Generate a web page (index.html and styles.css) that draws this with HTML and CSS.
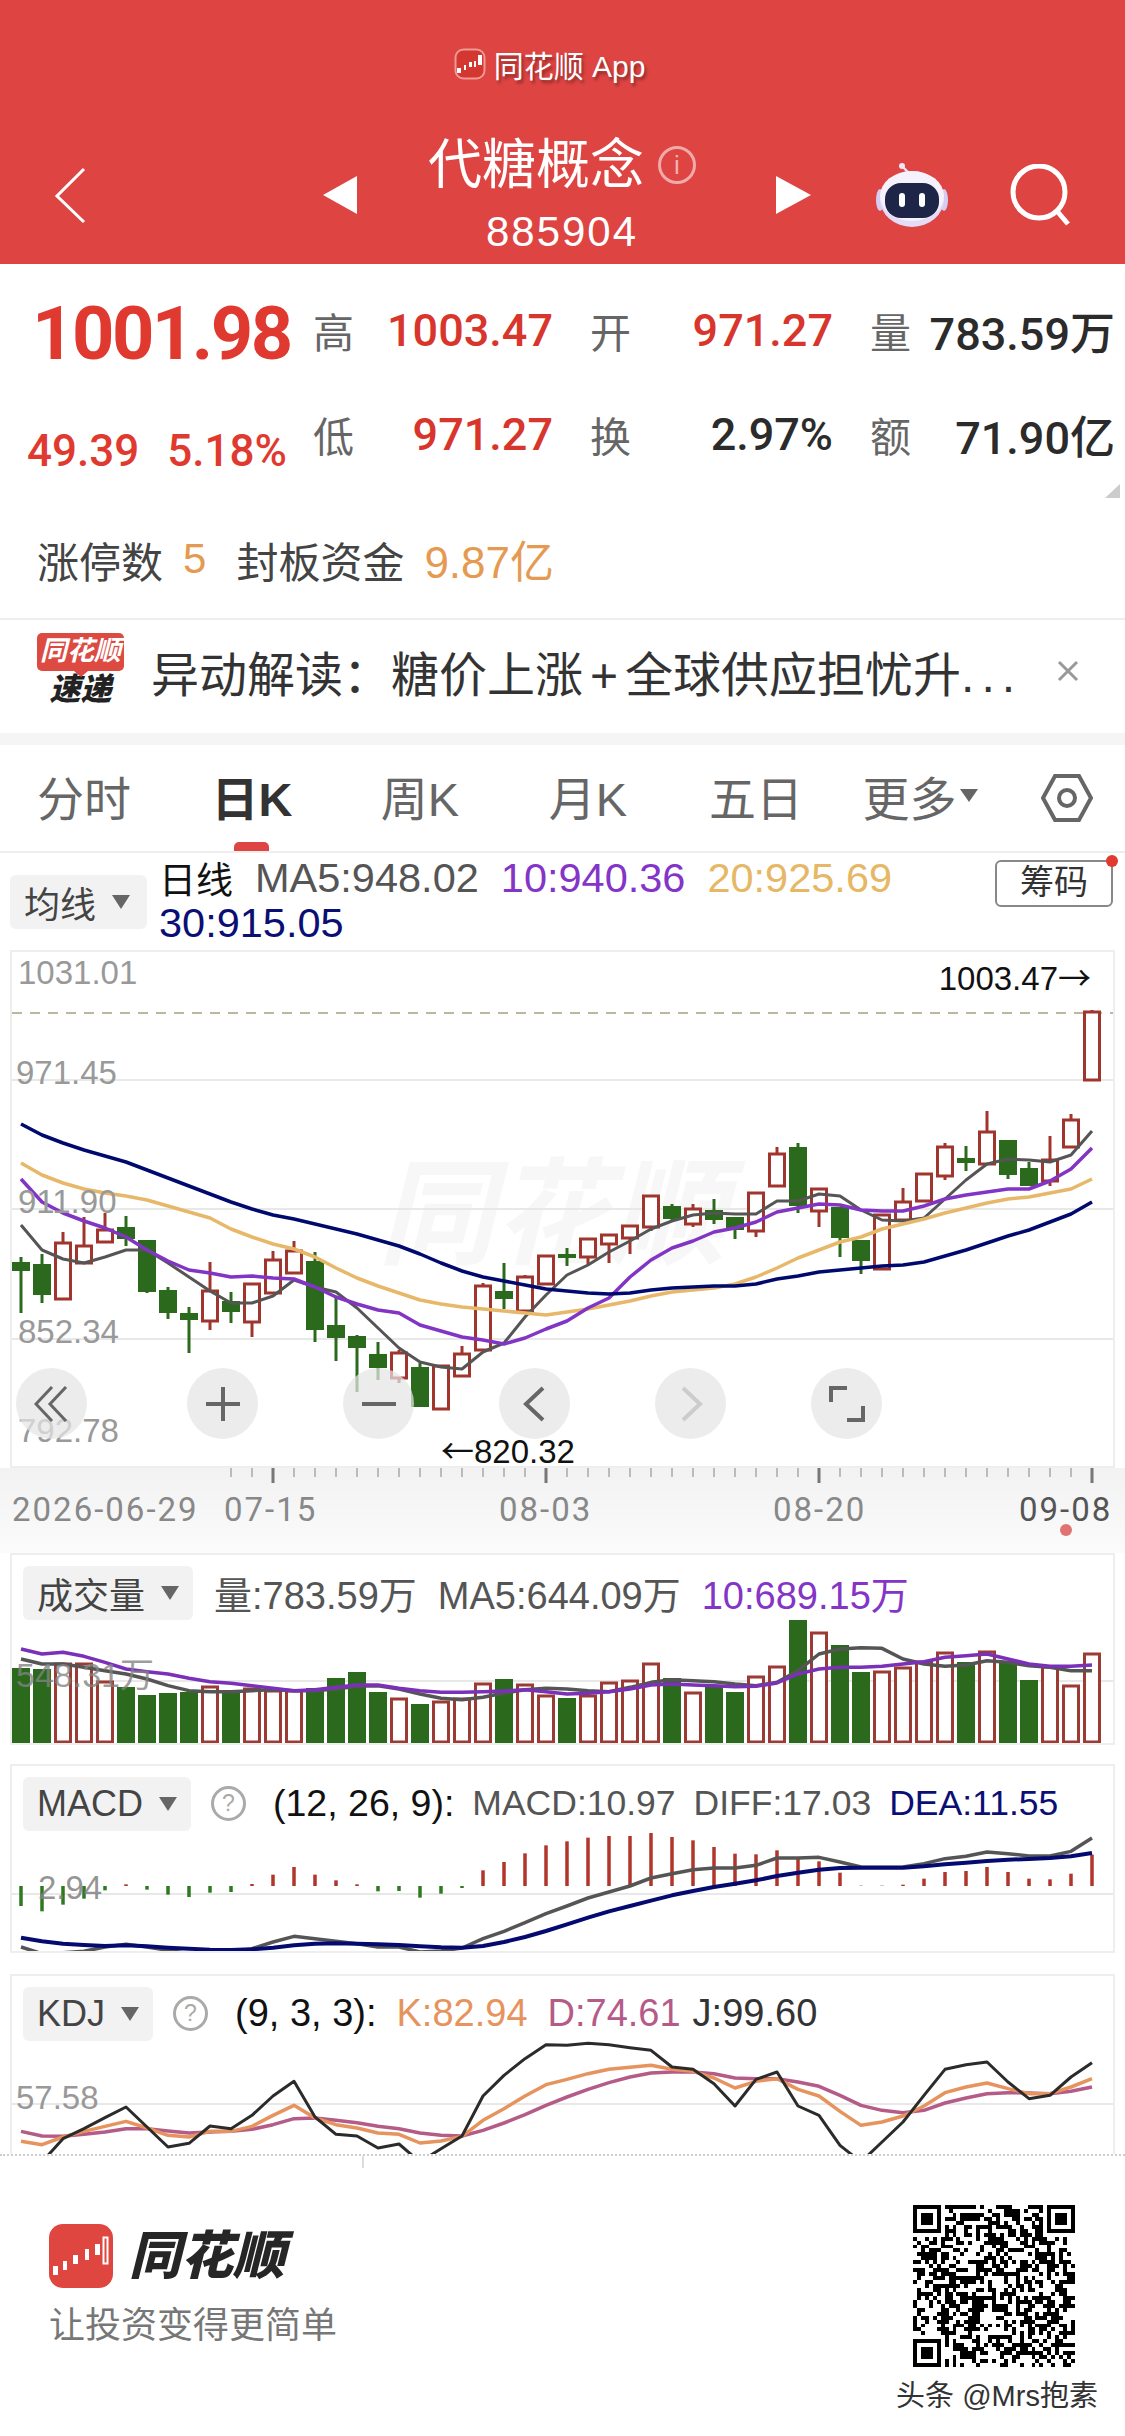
FILE: index.html
```html
<!DOCTYPE html>
<html lang="zh-CN">
<head>
    <meta charset="UTF-8">
    <meta name="viewport" content="width=device-width, initial-scale=1.0">
    <title>代糖概念</title>
    <link rel="stylesheet" href="styles.css">
</head>
<body>
    <header class="header">
        <div class="appRow">
            <svg class="appLogo" viewBox="0 0 32 32">
                <rect x="1.5" y="1.5" width="29" height="29" rx="8" fill="#d3372f" stroke="#f19a95" stroke-width="2"/>
                <path d="M3 20h4v5H3zM10 17h2v5h-2zM15 14h3v5h-3zM20 13h2v6h-2zM24 7h4v10h-4z" fill="#fff"/>
            </svg>
            <span class="appName">同花顺 App</span>
        </div>
        <div class="navRow">
            <svg class="backIcon" viewBox="0 0 32 56"><path d="M30 2L3 29l27 26" fill="none" stroke="#fff" stroke-width="3"/></svg>
            <span class="triLeft"></span>
            <div class="titleBox">
                <div class="titleLine">
                    <span class="title">代糖概念</span>
                    <span class="infoIcon">i</span>
                </div>
                <div class="code">885904</div>
            </div>
            <span class="triRight"></span>
            <div class="navRight">
                <svg class="robot" viewBox="0 0 72 64">
                    <path d="M33 12C32 6 27 7 27 3" fill="none" stroke="#eadff5" stroke-width="2.5"/>
                    <circle cx="26" cy="3" r="3" fill="#f0e6fa"/>
                    <ellipse cx="4" cy="37" rx="4" ry="11" fill="#d5ccf2"/>
                    <ellipse cx="68" cy="37" rx="4" ry="11" fill="#d5ccf2"/>
                    <ellipse cx="36" cy="36" rx="32" ry="28" fill="#e3dcf6"/>
                    <ellipse cx="36" cy="33" rx="32" ry="25" fill="#f6f2fc"/>
                    <rect x="9" y="20" width="54" height="35" rx="16" fill="#1f2547"/>
                    <rect x="23" y="30" width="6" height="14" rx="3" fill="#fff"/>
                    <rect x="43" y="30" width="6" height="14" rx="3" fill="#fff"/>
                </svg>
                <svg class="searchIcon" viewBox="0 0 60 62">
                    <circle cx="29" cy="28" r="26" fill="none" stroke="#fff" stroke-width="5"/>
                    <path d="M47 47l11 13" fill="none" stroke="#fff" stroke-width="5"/>
                </svg>
            </div>
        </div>
    </header>

    <section class="quote">
        <div class="quoteTop">
            <div class="priceCol">
                <div class="price">1001.98</div>
                <div class="change"><span>49.39</span><span>5.18%</span></div>
            </div>
            <div class="stats">
                <div class="stat"><span class="statName">高</span><span class="statVal up">1003.47</span></div>
                <div class="stat"><span class="statName">开</span><span class="statVal up">971.27</span></div>
                <div class="stat"><span class="statName">量</span><span class="statVal">783.59万</span></div>
                <div class="stat"><span class="statName">低</span><span class="statVal up">971.27</span></div>
                <div class="stat"><span class="statName">换</span><span class="statVal">2.97%</span></div>
                <div class="stat"><span class="statName">额</span><span class="statVal">71.90亿</span></div>
            </div>
        </div>
        <span class="cornerMark"></span>
        <div class="limitRow">
            <span>涨停数</span><span class="orange limitNum">5</span>
            <span class="fundName">封板资金</span><span class="orange limitFund">9.87亿</span>
        </div>
    </section>

    <section class="banner">
        <div class="bannerLogo">
            <span class="badge">同花顺</span>
            <span class="badgeSub">速递</span>
        </div>
        <div class="bannerText">异动解读：糖价上涨<span class="plus">+</span>全球供应担忧升<span class="dots">...</span></div>
        <svg class="closeIcon" viewBox="0 0 24 24"><path d="M3 3l18 18M21 3L3 21" stroke="#999" stroke-width="3"/></svg>
    </section>

    <nav class="tabs">
        <span class="tab">分时</span>
        <span class="tab active">日K</span>
        <span class="tab">周K</span>
        <span class="tab">月K</span>
        <span class="tab">五日</span>
        <span class="tab tabMore">更多<i class="tabArrow"></i></span>
        <svg class="setIcon" viewBox="0 0 52 48">
            <path d="M14 2h24l12 22-12 22H14L2 24z" fill="none" stroke="#666" stroke-width="4"/>
            <circle cx="26" cy="24" r="8" fill="none" stroke="#666" stroke-width="4"/>
        </svg>
    </nav>

    <section class="legend">
        <div class="chip maChip">均线<i class="chipArrow"></i></div>
        <div class="legendText">
            <div class="legendLine">
                <span class="black legendLead">日线</span>
                <span class="gray">MA5:948.02</span>
                <span class="purple">10:940.36</span>
                <span class="gold">20:925.69</span>
            </div>
            <div class="legendLine">
                <span class="navy">30:915.05</span>
            </div>
        </div>
        <div class="chipBtn">筹码<i class="redDot"></i></div>
    </section>

    <section class="panel klinePanel">
        <div class="watermark">同花顺</div>
        <svg id="kline" class="chart" viewBox="12 952 1101 514"></svg>
        <span class="yLabel y1">1031.01</span>
        <span class="yLabel y2">971.45</span>
        <span class="yLabel y3">911.90</span>
        <span class="yLabel y4">852.34</span>
        <span class="yLabel y5">792.78</span>
        <span class="mark markHigh">1003.47<span class="arrow">→</span></span>
        <span class="mark markLow"><span class="arrow">←</span>820.32</span>
        <div class="tools">
            <span class="tool toolFirst"><svg viewBox="0 0 36 36"><path d="M18 1L2 18l16 17M32 1L16 18l16 17" fill="none" stroke="#666" stroke-width="3"/></svg></span>
            <span class="tool"><svg viewBox="0 0 36 36"><path d="M18 1v34M1 18h34" fill="none" stroke="#666" stroke-width="4"/></svg></span>
            <span class="tool"><svg viewBox="0 0 36 36"><path d="M1 18h34" fill="none" stroke="#666" stroke-width="4"/></svg></span>
            <span class="tool"><svg viewBox="0 0 36 36"><path d="M26 2L9 18l17 16" fill="none" stroke="#666" stroke-width="4"/></svg></span>
            <span class="tool"><svg viewBox="0 0 36 36"><path d="M10 2l17 16L10 34" fill="none" stroke="#ccc" stroke-width="4"/></svg></span>
            <span class="tool"><svg viewBox="0 0 36 36"><path d="M2 16V2h16M34 20v14H18" fill="none" stroke="#666" stroke-width="4"/></svg></span>
        </div>
    </section>

    <section class="axis">
        <svg id="ticks" class="ticks" viewBox="0 0 1125 18"></svg>
        <div class="dates">
            <span>2026-06-29</span>
            <span>07-15</span>
            <span>08-03</span>
            <span>08-20</span>
            <span class="lastDate">09-08</span>
        </div>
        <i class="axisDot"></i>
    </section>

    <section class="panel volPanel">
        <div class="panelHead volHead">
            <div class="chip">成交量<i class="chipArrow"></i></div>
            <span class="gray">量:783.59万</span>
            <span class="gray">MA5:644.09万</span>
            <span class="purple">10:689.15万</span>
        </div>
        <svg id="vol" class="chart" viewBox="12 1621 1101 124"></svg>
        <span class="yLabel volLabel">548.31万</span>
    </section>

    <section class="panel macdPanel">
        <div class="panelHead macdHead">
            <div class="chip">MACD<i class="chipArrow"></i></div>
            <span class="help">?</span>
            <span class="black params">(12, 26, 9):</span>
            <span class="gray">MACD:10.97</span>
            <span class="gray">DIFF:17.03</span>
            <span class="navy">DEA:11.55</span>
        </div>
        <svg id="macd" class="chart" viewBox="12 1829 1101 122"></svg>
        <span class="yLabel macdLabel">2.94</span>
    </section>

    <section class="panel kdjPanel">
        <div class="panelHead kdjHead">
            <div class="chip">KDJ<i class="chipArrow"></i></div>
            <span class="help">?</span>
            <span class="black">(9, 3, 3):</span>
            <span class="kColor">K:82.94</span>
            <span class="dColor">D:74.61</span>
            <span class="jColor">J:99.60</span>
        </div>
        <svg id="kdj" class="chart" viewBox="12 2039 1101 115"></svg>
        <span class="yLabel kdjLabel">57.58</span>
    </section>

    <footer class="footer">
        <div class="brand">
            <div class="brandTop">
                <svg class="brandLogo" viewBox="0 0 64 64">
                    <rect width="64" height="64" rx="14" fill="#df4640"/>
                    <path d="M4 42h5v9H4zM14 37h4v9h-4zM24 31h5v9h-5zM36 25h4v11h-4zM46 20h5v11h-5z" fill="#fff"/>
                    <rect x="54.5" y="13.5" width="4" height="26" fill="none" stroke="#fff" stroke-width="2"/>
                </svg>
                <span class="brandName">同花顺</span>
            </div>
            <div class="slogan">让投资变得更简单</div>
        </div>
        <div class="qrBox">
            <svg id="qr" class="qr" viewBox="0 0 41 41" shape-rendering="crispEdges"></svg>
            <div class="credit">头条 @Mrs抱素</div>
        </div>
    </footer>

    <script src="chart.js"></script>
</body>
</html>
```

FILE: styles.css
```css
* {
    box-sizing: border-box;
}
body {
    margin: 0;
    width: 1125px;
    height: 2436px;
    overflow: hidden;
    background: #fff;
    font-family: "Liberation Sans", "Noto Sans CJK SC", sans-serif;
    color: #333;
}
i {
    font-style: normal;
}

/* header */
.header {
    height: 264px;
    background: #dd4442;
    color: #fff;
}
.appRow {
    display: flex;
    align-items: center;
    justify-content: center;
    height: 82px;
    padding: 46px 26px 0 0;
}
.appLogo {
    width: 32px;
    height: 32px;
    margin-right: 8px;
}
.appName {
    font-size: 30px;
    text-shadow: 2px 3px 3px rgba(0, 0, 0, 0.35);
}
.navRow {
    display: grid;
    grid-template-columns: 323px 34px 419px 35px 1fr;
    align-items: center;
    height: 130px;
    margin-top: 48px;
}
.backIcon {
    width: 32px;
    height: 56px;
    margin-left: 54px;
}
.triLeft,
.triRight {
    width: 0;
    height: 0;
    border-top: 19px solid transparent;
    border-bottom: 19px solid transparent;
}
.triLeft {
    border-right: 34px solid #fff;
}
.triRight {
    border-left: 35px solid #fff;
}
.titleBox {
    padding-right: 9px;
    text-align: center;
}
.titleLine {
    display: flex;
    align-items: center;
    justify-content: center;
    height: 64px;
}
.title {
    font-size: 54px;
    line-height: 64px;
}
.infoIcon {
    width: 38px;
    height: 38px;
    margin-left: 14px;
    border: 3px solid rgba(255, 255, 255, 0.55);
    border-radius: 50%;
    font-size: 26px;
    line-height: 32px;
    color: rgba(255, 255, 255, 0.6);
}
.code {
    margin-top: 10px;
    font-size: 42px;
    line-height: 50px;
    letter-spacing: 2px;
}
.navRight {
    display: flex;
    align-items: center;
    padding-left: 65px;
}
.robot {
    width: 72px;
    height: 64px;
}
.searchIcon {
    width: 60px;
    height: 62px;
    margin-left: 62px;
}

/* quote block */
.quote {
    position: relative;
    height: 356px;
    padding-top: 14px;
    border-bottom: 2px solid #eee;
}
.quoteTop {
    display: flex;
}
.priceCol {
    width: 316px;
    color: #e03a30;
}
.price {
    height: 104px;
    padding: 4px 0 0 32px;
    font-family: Roboto, sans-serif;
    font-size: 74px;
    font-weight: 700;
    line-height: 104px;
    letter-spacing: -2.5px;
}
.change {
    display: flex;
    gap: 28px;
    padding: 17px 0 0 27px;
    font-family: Roboto, sans-serif;
    font-size: 44px;
    font-weight: 500;
    line-height: 104px;
}
.stats {
    display: grid;
    grid-template-columns: 237px 240px 242px;
    grid-auto-rows: 104px;
    column-gap: 40px;
}
.stat {
    display: flex;
    align-items: center;
    justify-content: space-between;
}
.statName {
    margin-left: -3px;
    font-size: 41px;
    color: #666;
}
.statVal {
    font-family: Roboto, "Noto Sans CJK SC", sans-serif;
    font-size: 45px;
    font-weight: 500;
    color: #2b2b2b;
}
.statVal.up {
    color: #d8362c;
}
.cornerMark {
    position: absolute;
    top: 220px;
    right: 5px;
    width: 15px;
    height: 14px;
    background: #ccc;
    clip-path: polygon(100% 0, 100% 100%, 0 100%);
}
.limitRow {
    display: flex;
    align-items: center;
    height: 60px;
    margin-top: 26px;
    padding-left: 37px;
    font-size: 42px;
    color: #444;
}
.orange {
    color: #e59a52;
}
.limitNum {
    margin-left: 20px;
}
.fundName {
    margin-left: 30px;
}
.limitFund {
    margin-left: 20px;
    font-size: 44px;
}

/* news banner */
.banner {
    display: flex;
    align-items: center;
    height: 125px;
    padding: 0 0 12px 37px;
    border-bottom: 12px solid #f5f5f5;
}
.bannerLogo {
    display: flex;
    flex-direction: column;
    align-items: center;
    width: 87px;
}
.badge {
    position: relative;
    width: 87px;
    height: 38px;
    background: #dc4a42;
    border-radius: 5px;
    font-size: 27px;
    font-weight: 700;
    font-style: italic;
    line-height: 36px;
    text-align: center;
    color: #fff;
}
.badge::after {
    content: "";
    position: absolute;
    left: 37px;
    bottom: -6px;
    border-top: 6px solid #dc4a42;
    border-left: 7px solid transparent;
    border-right: 7px solid transparent;
}
.badgeSub {
    font-size: 31px;
    font-weight: 900;
    font-style: italic;
    line-height: 38px;
    color: #222;
}
.bannerText {
    width: 880px;
    margin-left: 27px;
    font-size: 48px;
    white-space: nowrap;
    color: #333;
}
.plus {
    padding: 0 7px;
}
.dots {
    letter-spacing: 7px;
}
.closeIcon {
    width: 24px;
    height: 24px;
    margin-left: 25px;
}

/* tabs */
.tabs {
    display: grid;
    grid-template-columns: repeat(6, 168px) 1fr;
    align-items: center;
    justify-items: center;
    height: 108px;
    border-bottom: 2px solid #eee;
}
.tab {
    position: relative;
    display: flex;
    align-items: center;
    justify-content: center;
    width: 100%;
    height: 106px;
    padding-bottom: 5px;
    font-size: 47px;
    color: #666;
}
.tabMore {
    padding-right: 8px;
}
.tab.active {
    font-weight: 700;
    color: #333;
}
.tab.active::after {
    content: "";
    position: absolute;
    left: 66px;
    bottom: 0;
    width: 35px;
    height: 9px;
    background: #dd4443;
    border-radius: 5px 5px 0 0;
}
.tabArrow {
    width: 0;
    height: 0;
    margin-left: 3px;
    border-top: 13px solid #666;
    border-left: 9px solid transparent;
    border-right: 9px solid transparent;
}
.setIcon {
    width: 52px;
    height: 48px;
}

/* chips and legends */
.chip {
    display: flex;
    align-items: center;
    height: 54px;
    padding: 0 14px;
    background: #f2f2f2;
    border-radius: 6px;
    font-size: 36px;
    color: #444;
}
.chipArrow {
    width: 0;
    height: 0;
    margin-left: 16px;
    border-top: 14px solid #666;
    border-left: 9px solid transparent;
    border-right: 9px solid transparent;
}
.legend {
    display: flex;
    align-items: flex-start;
    height: 95px;
}
.maChip {
    width: 137px;
    margin: 22px 0 0 10px;
}
.legendText {
    width: 836px;
    margin-left: 12px;
    padding-top: 2px;
    font-size: 41.5px;
    white-space: nowrap;
}
.legendLine {
    display: flex;
    align-items: center;
    gap: 22px;
    height: 45px;
}
.legendLead {
    font-size: 37px;
}
.chipBtn {
    position: relative;
    width: 118px;
    height: 47px;
    margin: 7px 0 0 0;
    border: 2px solid #888;
    border-radius: 6px;
    font-size: 34px;
    line-height: 41px;
    text-align: center;
    color: #333;
}
.redDot {
    position: absolute;
    top: -7px;
    right: -7px;
    width: 12px;
    height: 12px;
    background: #e23a30;
    border-radius: 50%;
}
.black {
    color: #111;
}
.gray {
    color: #555;
}
.purple {
    color: #8434c6;
}
.gold {
    color: #e6b765;
}
.navy {
    color: #0b0f74;
}
.kColor {
    color: #e6935e;
}
.dColor {
    color: #b45b87;
}
.jColor {
    margin-left: -8px;
    color: #333;
}

/* chart panels */
.panel {
    position: relative;
    width: 1105px;
    margin-left: 10px;
    border: 2px solid #eee;
    overflow: hidden;
}
.chart {
    position: relative;
    display: block;
    width: 1101px;
}
.klinePanel {
    height: 518px;
    margin-top: 2px;
    overflow: visible;
}
#kline {
    height: 514px;
}
.watermark {
    position: absolute;
    top: 198px;
    left: 366px;
    font-size: 116px;
    font-weight: 700;
    font-style: italic;
    line-height: 130px;
    color: #f7f7f7;
}
.yLabel {
    position: absolute;
    left: 6px;
    font-size: 33px;
    line-height: 36px;
    color: #999;
}
.y1 { top: 3px; }
.y2 { top: 103px; left: 4px; }
.y3 { top: 232px; }
.y4 { top: 362px; }
.y5 { top: 461px; }
.mark {
    position: absolute;
    z-index: 1;
    font-size: 33px;
    line-height: 40px;
    color: #111;
}
.arrow {
    font-family: "Noto Sans CJK SC", sans-serif;
}
.markHigh {
    top: 4px;
    right: 22px;
}
.markLow {
    top: 477px;
    left: 429px;
}
.tools {
    position: absolute;
    top: 416px;
    left: 4px;
    display: flex;
    gap: 85px;
}
.tool {
    display: flex;
    align-items: center;
    justify-content: center;
    width: 71px;
    height: 71px;
    background: rgba(228, 228, 228, 0.72);
    border-radius: 50%;
}
.tool svg {
    width: 36px;
    height: 36px;
}
.toolFirst {
    margin-right: 15px;
}

/* date axis */
.axis {
    position: relative;
    height: 85px;
    background: linear-gradient(#f2f2f2, #fbfbfb);
}
.ticks {
    display: block;
    width: 1125px;
    height: 18px;
}
.dates {
    display: grid;
    grid-template-columns: 212px 275px 274px 246px auto;
    padding: 5px 0 0 12px;
    font-family: Roboto, sans-serif;
    font-size: 33px;
    line-height: 38px;
    letter-spacing: 2px;
    color: #888;
}
.lastDate {
    color: #555;
}
.axisDot {
    position: absolute;
    top: 56px;
    left: 1060px;
    width: 12px;
    height: 12px;
    background: #e07272;
    border-radius: 50%;
}

.panelHead {
    display: flex;
    align-items: center;
    gap: 20px;
    height: 65px;
    padding: 10px 0 0 11px;
    font-size: 36px;
    white-space: nowrap;
}
.volHead,
.kdjHead {
    font-size: 38px;
}
.volHead {
    gap: 21px;
}
.macdHead {
    gap: 18px;
    font-size: 35.5px;
}
.macdHead .chip {
    margin-right: 2px;
}
.macdHead .help {
    margin-right: 9px;
}
.volHead .chip,
.kdjHead .chip,
.macdHead .chip {
    font-size: 36px;
}
.params {
    font-size: 37.5px;
}
.volPanel {
    height: 192px;
}
#vol {
    height: 124px;
}
.volLabel {
    top: 102px;
    left: 4px;
    font-size: 34px;
    color: rgba(130, 130, 130, 0.8);
}
.macdPanel {
    height: 189px;
    margin-top: 19px;
}
#macd {
    height: 122px;
}
.macdLabel {
    top: 104px;
    left: 26px;
    color: rgba(130, 130, 130, 0.85);
}
.kdjPanel {
    height: 180px;
    margin-top: 21px;
    border-bottom: 0;
}
#kdj {
    height: 115px;
}
.kdjLabel {
    top: 104px;
    left: 4px;
}
.help {
    width: 35px;
    height: 35px;
    margin-right: 7px;
    border: 3px solid #aaa;
    border-radius: 50%;
    font-size: 23px;
    line-height: 29px;
    text-align: center;
    color: #aaa;
}

/* footer */
.footer {
    position: relative;
    display: flex;
    justify-content: space-between;
    height: 282px;
    border-top: 2px dotted #ccc;
    background: #fff;
}
.footer::before {
    content: "";
    position: absolute;
    top: 0;
    left: 362px;
    width: 2px;
    height: 12px;
    background: #ddd;
}
.brand {
    padding: 68px 0 0 49px;
}
.brandTop {
    display: flex;
    align-items: center;
}
.brandLogo {
    width: 64px;
    height: 64px;
}
.brandName {
    margin-left: 16px;
    font-size: 52px;
    font-weight: 900;
    font-style: italic;
    line-height: 64px;
    color: #262626;
}
.slogan {
    margin-top: 16px;
    font-size: 36px;
    line-height: 44px;
    color: #777;
}
.qrBox {
    display: flex;
    flex-direction: column;
    align-items: center;
    width: 208px;
    margin-right: 27px;
    padding-top: 49px;
}
.qr {
    width: 162px;
    height: 162px;
}
.credit {
    margin-top: 12px;
    padding-left: 6px;
    font-size: 29px;
    line-height: 34px;
    white-space: nowrap;
    color: #333;
}
```

FILE: chart.js
```js
const NS = 'http://www.w3.org/2000/svg';
const X = i => 21 + 21 * i;

// [wick top, body top, body bottom, wick bottom], read off the picture
const candles = [
    ['g',1257,1262,1271,1313],['g',1254,1264,1295,1303],['r',1232,1243,1299,1299],['r',1217,1246,1263,1263],
    ['r',1213,1230,1242,1242],['g',1216,1227,1239,1246],['g',1240,1240,1292,1293],['g',1287,1290,1313,1319],
    ['g',1307,1313,1320,1353],['r',1262,1291,1321,1330],['g',1292,1301,1312,1323],['r',1284,1284,1322,1337],
    ['r',1251,1260,1293,1293],['r',1241,1251,1273,1273],['g',1252,1261,1330,1342],['g',1297,1325,1338,1361],
    ['g',1335,1336,1348,1392],['g',1342,1354,1368,1380],['r',1350,1353,1378,1383],['g',1363,1367,1407,1407],
    ['r',1366,1366,1409,1409],['r',1346,1354,1376,1376],['r',1283,1286,1350,1350],['g',1263,1291,1299,1309],
    ['r',1275,1277,1311,1311],['r',1255,1256,1284,1284],['g',1248,1254,1258,1266],['r',1239,1239,1257,1264],
    ['r',1235,1235,1244,1263],['r',1226,1226,1238,1254],['r',1196,1196,1227,1231],['g',1204,1206,1219,1222],
    ['r',1204,1209,1224,1227],['g',1199,1210,1220,1224],['g',1217,1217,1230,1239],['r',1192,1193,1231,1237],
    ['r',1147,1154,1186,1186],['g',1143,1147,1206,1213],['r',1188,1189,1211,1227],['g',1207,1207,1238,1257],
    ['g',1240,1240,1261,1274],['r',1214,1215,1269,1269],['r',1188,1202,1220,1220],['r',1174,1174,1201,1201],
    ['r',1143,1147,1176,1180],['g',1146,1158,1163,1171],['r',1111,1132,1164,1164],['g',1140,1140,1175,1179],
    ['g',1162,1168,1186,1186],['r',1136,1160,1181,1186],['r',1114,1120,1147,1147],['r',1010,1012,1080,1080]
];

const ma5 = [1225,1250,1259,1263,1257,1250,1250,1263,1277,1291,1303,1303,1296,1280,1287,1292,1308,1328,1348,1362,1367,1369,1352,1343,1317,1295,
    1275,1265,1252,1241,1229,1221,1215,1213,1214,1214,1201,1201,1194,1196,1210,1220,1221,1218,1199,1180,1164,1159,1160,1162,1155,1131];
const ma10 = [1179,1202,1213,1221,1228,1237,1250,1261,1270,1273,1277,1276,1278,1279,1287,1297,1304,1310,1313,1325,1331,1337,1340,1344,1338,1329,
    1321,1308,1298,1277,1260,1248,1241,1232,1228,1222,1212,1208,1204,1205,1210,1211,1211,1206,1199,1195,1192,1189,1189,1181,1169,1148];
const ma20 = [1163,1175,1183,1189,1193,1196,1200,1206,1212,1218,1229,1237,1244,1249,1257,1268,1278,1286,1293,1300,1304,1307,1309,1311,1313,1315,
    1312,1309,1305,1301,1296,1292,1290,1288,1284,1277,1268,1258,1250,1242,1237,1229,1224,1219,1213,1208,1203,1199,1197,1193,1189,1179];
const ma30 = [1124,1135,1143,1150,1156,1162,1170,1178,1186,1194,1202,1209,1215,1219,1224,1229,1234,1240,1246,1254,1263,1271,1277,1281,1285,1289,
    1291,1293,1294,1293,1290,1288,1287,1286,1286,1284,1279,1276,1272,1270,1268,1266,1265,1262,1256,1250,1243,1236,1230,1222,1214,1202];

const volTops = [1669,1670,1665,1665,1683,1688,1696,1694,1693,1688,1691,1690,1692,1692,1689,1679,1673,1693,1700,1705,1703,1700,1685,1680,1686,1697,
    1699,1697,1684,1682,1665,1679,1694,1688,1693,1678,1668,1620,1634,1646,1673,1673,1669,1663,1654,1663,1653,1662,1681,1668,1687,1655];
const volMa5 = [360,375,375,385,395,405,420,440,455,458,458,455,452,455,455,450,442,440,450,465,478,482,475,462,452,448,
    450,455,458,445,430,422,425,428,435,440,430,395,345,330,326,328,360,375,382,378,365,370,380,385,395,395].map(v => 1540 + v / 3);
const volMa10 = [330,345,340,352,370,390,398,405,418,428,433,440,448,455,452,445,438,438,448,455,460,460,458,456,452,458,
    465,463,458,450,438,435,438,440,443,442,432,405,390,385,385,382,375,368,355,350,345,360,375,382,382,378].map(v => 1540 + v / 3);

const macdBars = [432,448,428,410,385,367,383,398,405,392,390,366,338,315,338,355,367,388,387,407,395,378,325,300,274,250,
    238,227,222,222,213,225,235,255,275,277,265,290,298,332,371,371,368,350,330,327,315,330,350,352,335,278].map(v => 1760 + v / 3);
const diff = [555,575,572,568,555,547,555,565,575,572,570,560,540,523,530,538,545,555,555,570,567,558,530,508,482,455,
    432,408,390,372,348,335,323,318,318,310,288,288,286,300,315,316,315,305,290,283,270,275,282,282,268,228].map(v => 1760 + v / 3);
const dea = [527,538,545,549,552,550,553,557,560,563,564,562,557,550,545,544,545,547,549,553,556,557,552,540,525,507,
    487,467,448,432,416,400,387,375,365,355,342,332,323,318,317,317,317,313,307,302,297,293,291,288,283,273].map(v => 1760 + v / 3);

const kLine = [508,518,495,478,463,448,468,490,495,478,478,463,430,400,438,458,468,483,487,513,507,493,445,410,372,338,
    322,305,292,286,280,292,298,318,348,328,320,352,372,418,460,450,432,402,362,345,333,350,365,365,345,320].map(v => 1970 + v / 3);
const dLine = [478,492,493,487,480,470,470,477,483,480,478,472,458,440,438,445,452,463,470,483,490,492,475,453,428,400,
    375,352,332,315,303,300,300,305,318,320,320,330,343,370,400,415,422,415,393,378,365,362,363,365,358,345].map(v => 1970 + v / 3);
const jLine = [620,570,500,470,437,405,465,525,514,462,470,430,372,328,435,487,492,528,516,570,530,492,372,310,260,218,
    220,214,218,227,235,285,292,335,402,322,300,402,430,520,570,510,450,370,292,278,270,330,380,370,315,272].map(v => 1970 + v / 3);

function el(parent, name, attrs) {
    const node = document.createElementNS(NS, name);
    for (let key in attrs) {
        node.setAttribute(key, attrs[key]);
    }
    parent.appendChild(node);
    return node;
}

function line(svg, ys, color, width) {
    const points = ys.map((y, i) => X(i) + ',' + y).join(' ');
    el(svg, 'polyline', { points: points, fill: 'none', stroke: color, 'stroke-width': width, 'stroke-linejoin': 'round' });
}

function gridLine(svg, y, extra) {
    el(svg, 'line', Object.assign({ x1: 12, x2: 1113, y1: y, y2: y, stroke: '#e8e8e8', 'stroke-width': 2 }, extra));
}

const RED = '#a0352d';
const GREEN = '#2b6a1d';

// k-line
const kline = document.getElementById('kline');
gridLine(kline, 1013, { stroke: '#bdb79f', 'stroke-dasharray': '10 8' });
[1080, 1209, 1339].forEach(y => gridLine(kline, y));
candles.forEach((c, i) => {
    const color = c[0] === 'r' ? RED : GREEN;
    el(kline, 'line', { x1: X(i), x2: X(i), y1: c[1], y2: c[4], stroke: color, 'stroke-width': 3 });
    if (c[0] === 'r') {
        el(kline, 'rect', { x: X(i) - 7.5, y: c[2], width: 15, height: c[3] - c[2], fill: '#fff', stroke: color, 'stroke-width': 3 });
    } else {
        el(kline, 'rect', { x: X(i) - 9, y: c[2], width: 18, height: Math.max(c[3] - c[2], 3), fill: color });
    }
});
line(kline, ma5, '#555', 3);
line(kline, ma20, '#e7b86a', 3.5);
line(kline, ma10, '#8234c4', 3.5);
line(kline, ma30, '#000a6e', 3.5);

// date ticks
const ticks = document.getElementById('ticks');
for (let i = 10; i < 52; i++) {
    const major = [12, 25, 38, 51].includes(i);
    el(ticks, 'line', { x1: X(i), x2: X(i), y1: 0, y2: major ? 15 : 9, stroke: major ? '#777' : '#bbb', 'stroke-width': major ? 3 : 2 });
}

// volume
const vol = document.getElementById('vol');
gridLine(vol, 1682);
volTops.forEach((top, i) => {
    if (candles[i][0] === 'r') {
        el(vol, 'rect', { x: X(i) - 7.5, y: top, width: 15, height: 1743 - top, fill: '#fff', stroke: '#9c3a34', 'stroke-width': 3 });
    } else {
        el(vol, 'rect', { x: X(i) - 9, y: top, width: 18, height: 1745 - top, fill: GREEN });
    }
});
line(vol, volMa5, '#555', 3.5);
line(vol, volMa10, '#7a30b8', 3.5);

// macd
const macd = document.getElementById('macd');
gridLine(macd, 1892);
macdBars.forEach((end, i) => {
    el(macd, 'line', { x1: X(i), x2: X(i), y1: 1884, y2: end, stroke: end < 1884 ? '#b0352a' : '#2e7a20', 'stroke-width': 3.5 });
});
line(macd, diff, '#555', 3.5);
line(macd, dea, '#050a70', 4);

// kdj
const kdj = document.getElementById('kdj');
gridLine(kdj, 2102);
line(kdj, dLine, '#b45b87', 3.5);
line(kdj, kLine, '#e6935e', 3.5);
line(kdj, jLine, '#2b2b2b', 3);

// qr code, finder squares plus noise
const qr = document.getElementById('qr');
let seed = 20260908;
function rnd() {
    seed = (seed * 1103515245 + 12345) % 2147483648;
    return seed / 2147483648;
}
function inFinder(x, y) {
    return (x < 8 && y < 8) || (x > 32 && y < 8) || (x < 8 && y > 32);
}
let d = '';
for (let y = 0; y < 41; y++) {
    for (let x = 0; x < 41; x++) {
        if (!inFinder(x, y) && rnd() > 0.5) {
            d += 'M' + x + ' ' + y + 'h1v1h-1z';
        }
    }
}
[[0, 0], [34, 0], [0, 34]].forEach(p => {
    d += `M${p[0]} ${p[1]}h7v7h-7zM${p[0] + 1} ${p[1] + 1}v5h5v-5zM${p[0] + 2} ${p[1] + 2}h3v3h-3z`;
});
el(qr, 'path', { d: d, fill: '#000', 'fill-rule': 'evenodd' });
```
